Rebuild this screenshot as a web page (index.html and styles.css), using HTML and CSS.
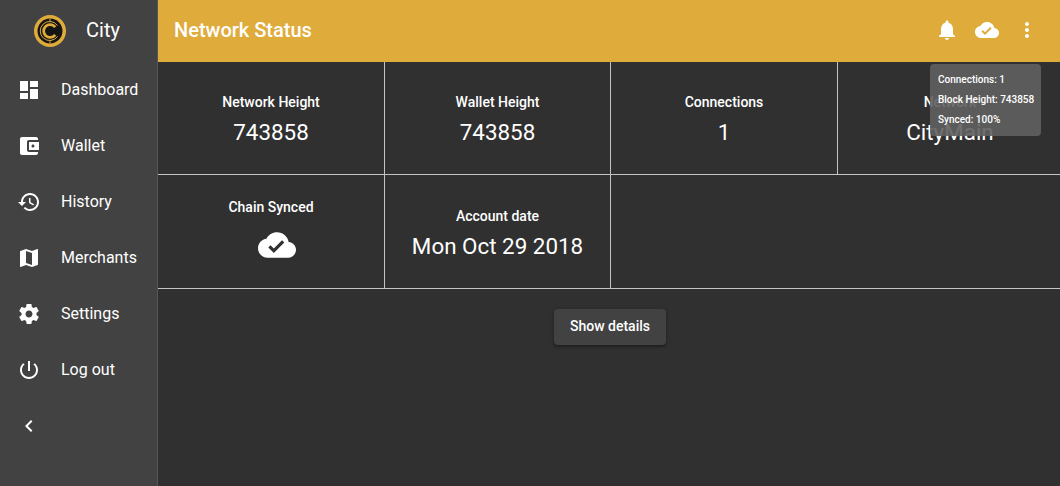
FILE: index.html
```html
<!DOCTYPE html>
<html lang="en">
<head>
  <meta charset="UTF-8">
  <title>Network Status</title>
  <link rel="stylesheet" href="styles.css">
</head>
<body>
  <div class="app">
    <nav class="sidebar">
      <div class="brand">
        <svg class="logo" viewBox="0 0 32 32">
          <circle cx="16" cy="16" r="16" fill="#dfab3b"/>
          <circle cx="16" cy="16" r="12.5" fill="#151515"/>
          <path d="M23.5 10.5a9.5 9.5 0 1 0 0 11" fill="none" stroke="#dfab3b" stroke-width="1"/>
          <path d="M21.2 12.2a6.4 6.4 0 1 0 0 7.6" fill="none" stroke="#dfab3b" stroke-width="2.8"/>
          <path d="M16 3.5v3M16 25.5v3" stroke="#dfab3b" stroke-width="1"/>
        </svg>
        <span class="brand-name">City</span>
      </div>
      <a class="nav-item">
        <svg class="icon" viewBox="0 0 24 24"><path d="M3 13h8V3H3v10zm0 8h8v-6H3v6zm10 0h8V11h-8v10zm0-18v6h8V3h-8z"/></svg>
        <span>Dashboard</span>
      </a>
      <a class="nav-item">
        <svg class="icon" viewBox="0 0 24 24"><path d="M21 18v1c0 1.1-.9 2-2 2H5c-1.11 0-2-.9-2-2V5c0-1.1.89-2 2-2h14c1.1 0 2 .9 2 2v1h-9c-1.11 0-2 .9-2 2v8c0 1.1.89 2 2 2h9zm-9-2h10V8H12v8zm4-2.5c-.83 0-1.5-.67-1.5-1.5s.67-1.5 1.5-1.5 1.5.67 1.5 1.5-.67 1.5-1.5 1.5z"/></svg>
        <span>Wallet</span>
      </a>
      <a class="nav-item">
        <svg class="icon" viewBox="0 0 24 24"><path d="M13 3c-4.97 0-9 4.03-9 9H1l3.89 3.89.07.14L9 12H6c0-3.87 3.13-7 7-7s7 3.13 7 7-3.13 7-7 7c-1.93 0-3.68-.79-4.94-2.06l-1.42 1.42C8.27 19.99 10.51 21 13 21c4.97 0 9-4.03 9-9s-4.03-9-9-9zm-1 5v5l4.28 2.54.72-1.21-3.5-2.08V8H12z"/></svg>
        <span>History</span>
      </a>
      <a class="nav-item">
        <svg class="icon" viewBox="0 0 24 24"><path d="M20.5 3l-.16.03L15 5.1 9 3 3.36 4.9c-.21.07-.36.25-.36.48V20.5c0 .28.22.5.5.5l.16-.03L9 18.9l6 2.1 5.64-1.9c.21-.07.36-.25.36-.48V3.5c0-.28-.22-.5-.5-.5zM15 19l-6-2.11V5l6 2.11V19z"/></svg>
        <span>Merchants</span>
      </a>
      <a class="nav-item">
        <svg class="icon" viewBox="0 0 24 24"><path d="M19.43 12.98c.04-.32.07-.64.07-.98s-.03-.66-.07-.98l2.11-1.65c.19-.15.24-.42.12-.64l-2-3.46c-.12-.22-.39-.3-.61-.22l-2.49 1c-.52-.4-1.08-.73-1.69-.98l-.38-2.65C14.46 2.18 14.25 2 14 2h-4c-.25 0-.46.18-.49.42l-.38 2.65c-.61.25-1.17.59-1.69.98l-2.49-1c-.23-.09-.49 0-.61.22l-2 3.46c-.13.22-.07.49.12.64l2.11 1.65c-.04.32-.07.65-.07.98s.03.66.07.98l-2.11 1.65c-.19.15-.24.42-.12.64l2 3.46c.12.22.39.3.61.22l2.49-1c.52.4 1.08.73 1.69.98l.38 2.65c.03.24.24.42.49.42h4c.25 0 .46-.18.49-.42l.38-2.65c.61-.25 1.17-.59 1.69-.98l2.49 1c.23.09.49 0 .61-.22l2-3.46c.12-.22.07-.49-.12-.64l-2.11-1.65zM12 15.5c-1.93 0-3.5-1.57-3.5-3.5s1.57-3.5 3.5-3.5 3.5 1.57 3.5 3.5-1.57 3.5-3.5 3.5z"/></svg>
        <span>Settings</span>
      </a>
      <a class="nav-item">
        <svg class="icon" viewBox="0 0 24 24"><path d="M13 3h-2v10h2V3zm4.83 2.17l-1.42 1.42C17.99 7.86 19 9.81 19 12c0 3.87-3.13 7-7 7s-7-3.13-7-7c0-2.19 1.01-4.14 2.58-5.42L6.17 5.17C4.23 6.82 3 9.26 3 12c0 4.97 4.03 9 9 9s9-4.03 9-9c0-2.74-1.23-5.18-3.17-6.83z"/></svg>
        <span>Log out</span>
      </a>
      <a class="nav-item">
        <svg class="icon" viewBox="0 0 24 24"><path d="M15.41 7.41L14 6l-6 6 6 6 1.41-1.41L10.83 12z"/></svg>
      </a>
    </nav>
    <div class="content">
      <header class="toolbar">
        <h1>Network Status</h1>
        <div class="toolbar-actions">
          <svg class="icon" viewBox="0 0 24 24"><path d="M12 22c1.1 0 2-.9 2-2h-4c0 1.1.89 2 2 2zm6-6v-5c0-3.07-1.64-5.64-4.5-6.32V4c0-.83-.67-1.5-1.5-1.5s-1.5.67-1.5 1.5v.68C7.63 5.36 6 7.92 6 11v5l-2 2v1h16v-1l-2-2z"/></svg>
          <svg class="icon" viewBox="0 0 24 24"><path d="M19.35 10.04C18.67 6.59 15.64 4 12 4 9.11 4 6.6 5.64 5.35 8.04 2.34 8.36 0 10.91 0 14c0 3.31 2.69 6 6 6h13c2.76 0 5-2.24 5-5 0-2.64-2.05-4.78-4.65-4.96zM10 17l-3.5-3.5 1.41-1.41L10 14.17 15.18 9l1.41 1.41L10 17z"/></svg>
          <svg class="icon" viewBox="0 0 24 24"><path d="M12 8c1.1 0 2-.9 2-2s-.9-2-2-2-2 .9-2 2 .9 2 2 2zm0 2c-1.1 0-2 .9-2 2s.9 2 2 2 2-.9 2-2-.9-2-2-2zm0 6c-1.1 0-2 .9-2 2s.9 2 2 2 2-.9 2-2-.9-2-2-2z"/></svg>
        </div>
      </header>
      <div class="tooltip">
        <div>Connections: 1</div>
        <div>Block Height: 743858</div>
        <div>Synced: 100%</div>
      </div>
      <section class="tiles">
        <div class="tile">
          <div class="tile-label">Network Height</div>
          <div class="tile-value">743858</div>
        </div>
        <div class="tile">
          <div class="tile-label">Wallet Height</div>
          <div class="tile-value">743858</div>
        </div>
        <div class="tile">
          <div class="tile-label">Connections</div>
          <div class="tile-value">1</div>
        </div>
        <div class="tile tile-last">
          <div class="tile-label">Network</div>
          <div class="tile-value">CityMain</div>
        </div>
        <div class="tile tile-icon">
          <div class="tile-label">Chain Synced</div>
          <svg class="icon icon-large" viewBox="0 0 24 24"><path d="M19.35 10.04C18.67 6.59 15.64 4 12 4 9.11 4 6.6 5.64 5.35 8.04 2.34 8.36 0 10.91 0 14c0 3.31 2.69 6 6 6h13c2.76 0 5-2.24 5-5 0-2.64-2.05-4.78-4.65-4.96zM10 17l-3.5-3.5 1.41-1.41L10 14.17 15.18 9l1.41 1.41L10 17z"/></svg>
        </div>
        <div class="tile tile-date">
          <div class="tile-label">Account date</div>
          <div class="tile-value">Mon Oct 29 2018</div>
        </div>
        <div class="tile-rest"></div>
      </section>
      <div class="details">
        <button class="details-btn">Show details</button>
      </div>
    </div>
  </div>
</body>
</html>
```

FILE: styles.css
```css
:root {
  --bg: #303030;
  --panel: #424242;
  --accent: #dfab3b;
  --line: #c4c4c4;
  --text: #fff;
}
html, body {
  height: 100%;
}
body {
  margin: 0;
  background: var(--bg);
  color: var(--text);
  font-family: Roboto, 'Liberation Sans', sans-serif;
  overflow: hidden;
}
.app {
  display: flex;
  height: 100%;
}
.icon {
  width: 24px;
  height: 24px;
  fill: currentColor;
  flex: none;
}
/* Sidebar */
.sidebar {
  width: 157px;
  flex: none;
  background: var(--panel);
  border-right: 1px solid #555;
}
.brand {
  display: flex;
  align-items: center;
  height: 62px;
  padding-left: 34px;
}
.logo {
  width: 32px;
  height: 32px;
}
.brand-name {
  margin: 0 0 2px 20px;
  font-size: 20px;
  font-weight: 400;
}
.nav-item {
  display: flex;
  align-items: center;
  gap: 20px;
  height: 56px;
  padding-left: 17px;
  font-size: 16px;
}
.nav-item span {
  margin-bottom: 2px;
}
/* Toolbar */
.content {
  flex: 1;
  position: relative;
  min-width: 0;
}
.toolbar {
  display: flex;
  align-items: center;
  justify-content: space-between;
  height: 62px;
  box-sizing: border-box;
  padding: 0 21px 2px 16px;
  background: var(--accent);
}
.toolbar h1 {
  margin: 0;
  font-size: 20px;
  font-weight: 500;
}
.toolbar-actions {
  display: flex;
  gap: 16px;
}
.tooltip {
  position: absolute;
  top: 64px;
  left: 772px;
  width: 111px;
  height: 72px;
  box-sizing: border-box;
  padding: 6px 8px;
  background: rgba(97, 97, 97, 0.9);
  border-radius: 4px;
  font-size: 10px;
  font-weight: 500;
  line-height: 20px;
  white-space: nowrap;
  z-index: 2;
}
/* Tiles */
.tiles {
  display: grid;
  grid-template-columns: 227px 226px 227px 1fr;
  grid-template-rows: 113px 114px;
}
.tile {
  display: flex;
  flex-direction: column;
  align-items: center;
  justify-content: center;
  box-sizing: border-box;
  padding-top: 3px;
  border-right: 1px solid var(--line);
  border-bottom: 1px solid var(--line);
}
.tile-last {
  padding-left: 2px;
  border-right: none;
}
.tile-date {
  padding-top: 5px;
}
.tile-label {
  font-size: 14px;
  font-weight: 500;
  line-height: 20px;
  margin-bottom: 4px;
}
.tile-value {
  font-size: 22.4px;
  line-height: 32px;
}
.tile-icon {
  padding: 0 0 3px;
}
.tile-icon .tile-label {
  margin-bottom: 9px;
}
.icon-large {
  width: 38px;
  height: 38px;
  margin-left: 12px;
}
.tile-rest {
  grid-column: span 2;
  border-bottom: 1px solid var(--line);
}
/* Details */
.details {
  display: flex;
  justify-content: center;
  padding: 20px 0 0 2px;
}
.details-btn {
  height: 36px;
  width: 112px;
  padding: 0 0 2px;
  border: none;
  border-radius: 4px;
  background: var(--panel);
  color: var(--text);
  font-family: inherit;
  font-size: 14px;
  font-weight: 500;
  box-shadow: 0 2px 2px rgba(0, 0, 0, 0.24), 0 1px 5px rgba(0, 0, 0, 0.2);
}
```
